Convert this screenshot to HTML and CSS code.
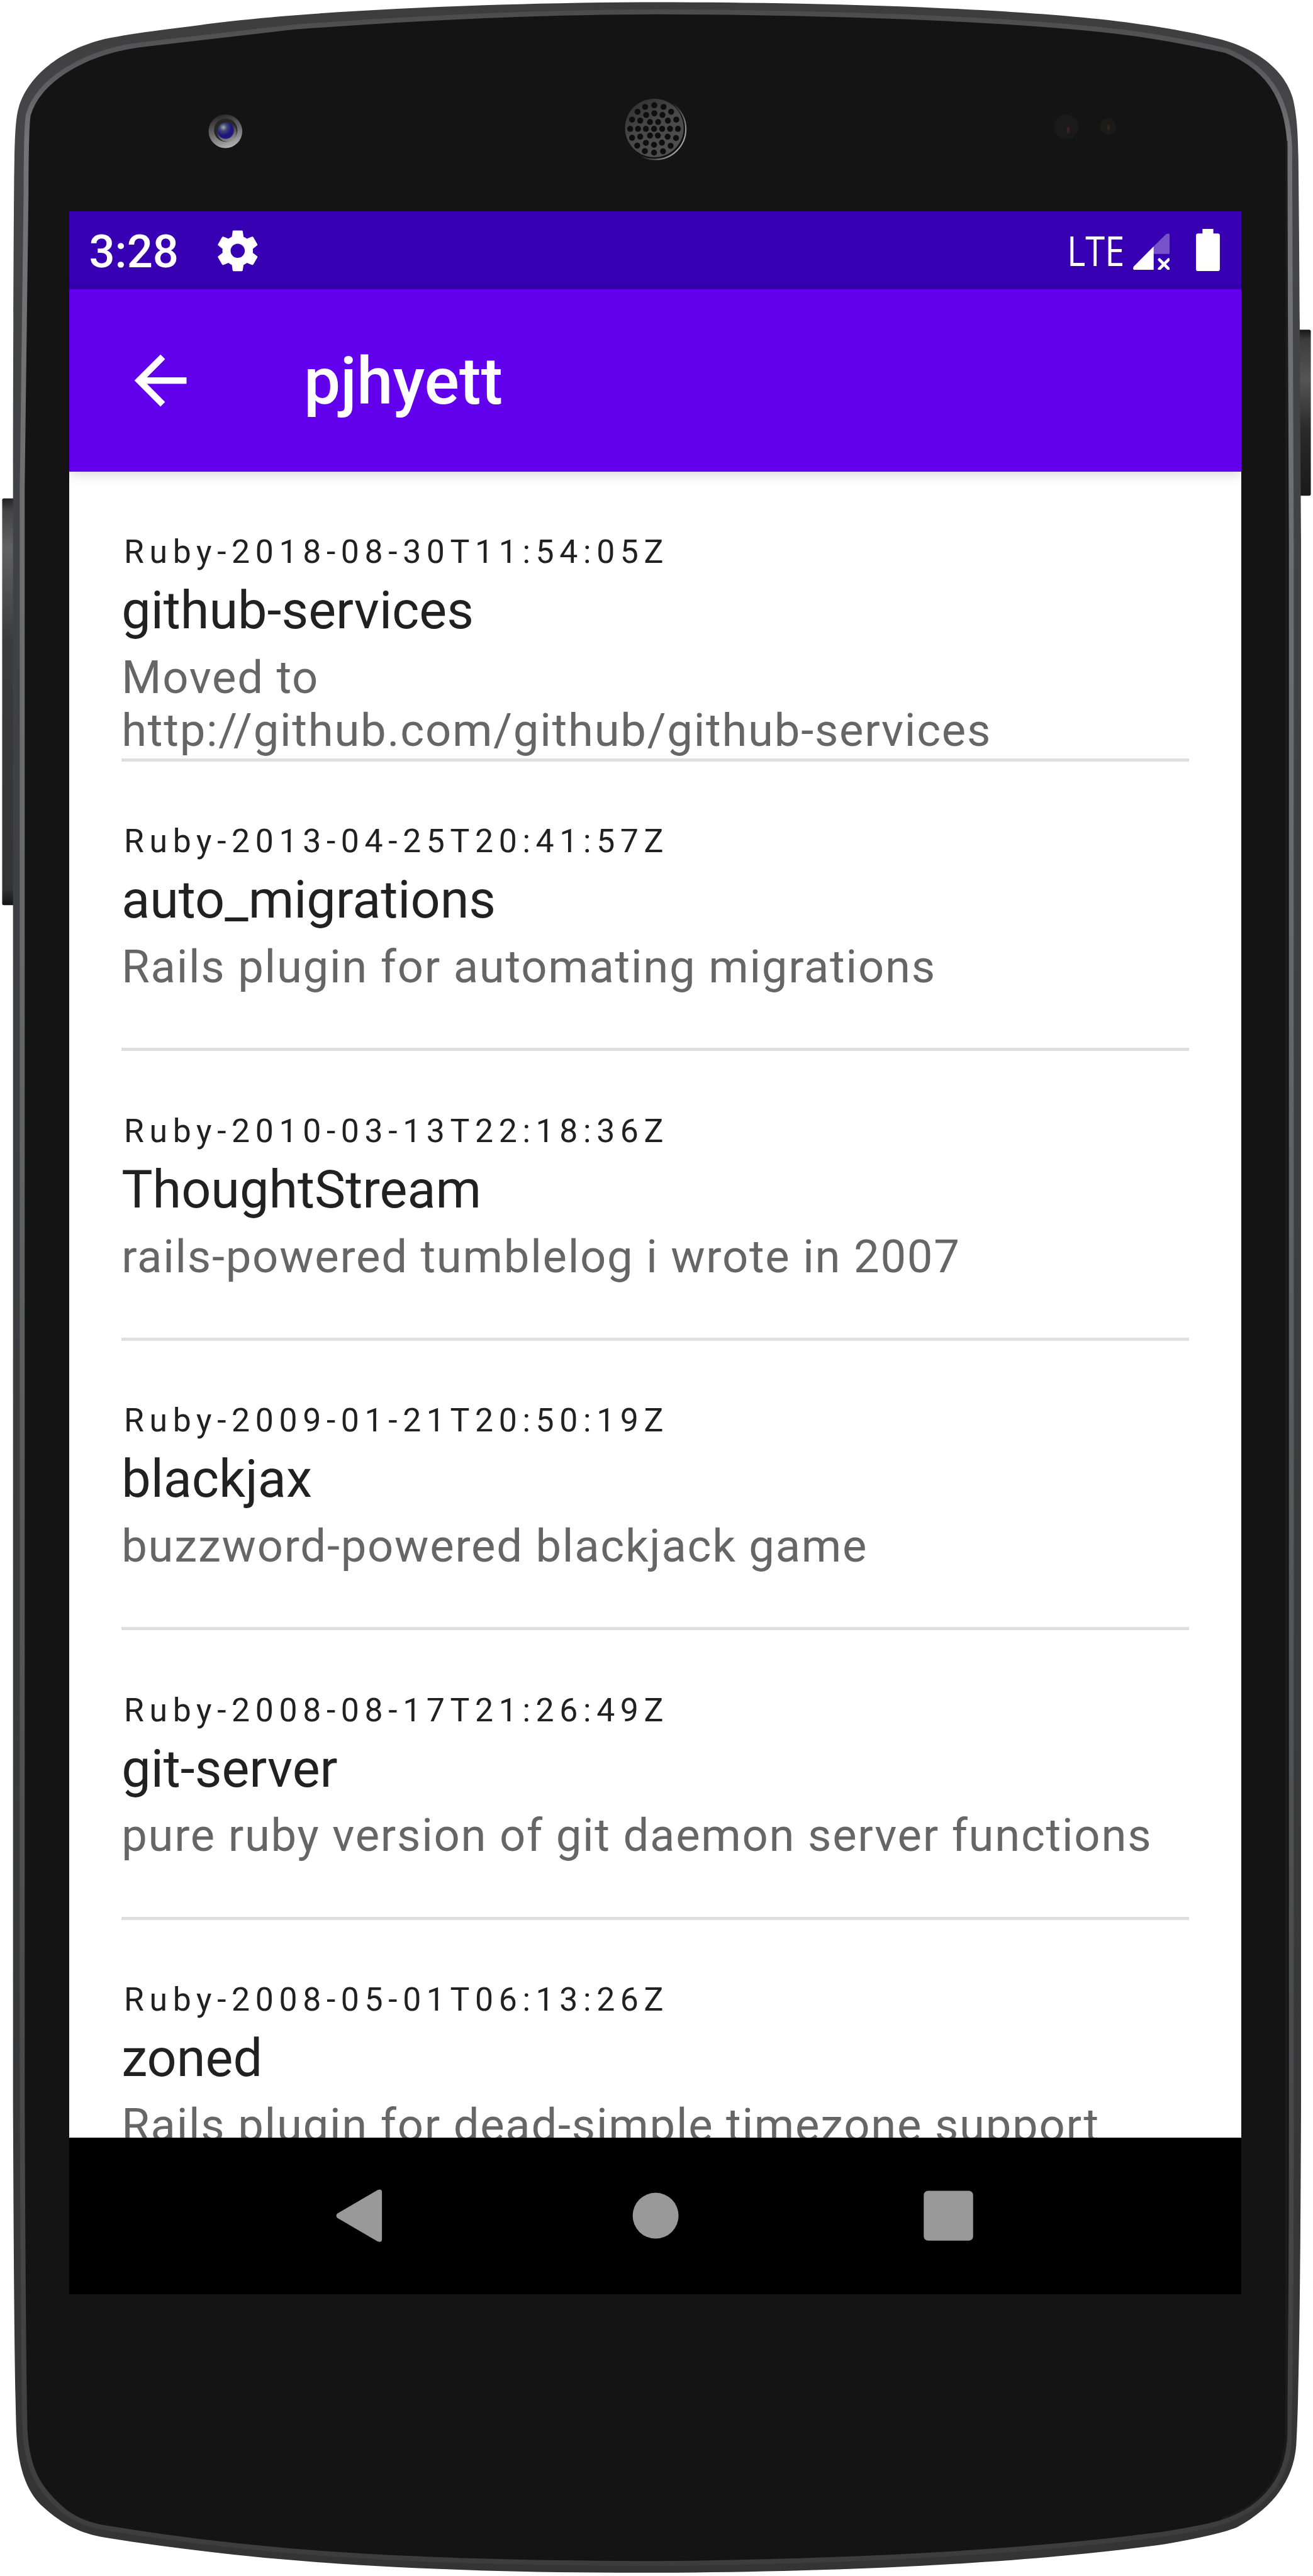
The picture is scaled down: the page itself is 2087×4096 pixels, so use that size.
FILE: index.html
```html
<!DOCTYPE html>
<html lang="en">
<head>
<meta charset="utf-8">
<title>pjhyett</title>
<link rel="stylesheet" href="styles.css">
</head>
<body>
<div class="device">
  <svg class="device-frame" viewBox="0 0 2420 4750" preserveAspectRatio="none" aria-hidden="true">
    <defs>
      <linearGradient id="rim" x1="0" y1="0" x2="0" y2="1">
        <stop offset="0" stop-color="#3c3c3d"/><stop offset=".04" stop-color="#454547"/><stop offset=".3" stop-color="#3e4044"/><stop offset="1" stop-color="#343434"/>
      </linearGradient>
      <linearGradient id="edge" x1="0" y1="0" x2="0" y2="1">
        <stop offset="0" stop-color="#4c4c4d"/><stop offset=".02" stop-color="#58585a"/><stop offset=".05" stop-color="#747477"/><stop offset=".35" stop-color="#68696d"/><stop offset=".8" stop-color="#4a4a4a"/><stop offset="1" stop-color="#3d3d3d"/>
      </linearGradient>
      <linearGradient id="keyL" x1="0" y1="0" x2="0" y2="1">
        <stop offset="0" stop-color="#222"/><stop offset=".03" stop-color="#444"/><stop offset=".12" stop-color="#626262"/><stop offset=".35" stop-color="#3c3c3c"/><stop offset=".96" stop-color="#333"/><stop offset="1" stop-color="#151515"/>
      </linearGradient>
      <linearGradient id="keyR" x1="0" y1="0" x2="0" y2="1">
        <stop offset="0" stop-color="#161616"/><stop offset=".06" stop-color="#3c3c3c"/><stop offset=".3" stop-color="#555"/><stop offset=".6" stop-color="#2a2a2a"/><stop offset="1" stop-color="#1a1a1a"/>
      </linearGradient>
      <linearGradient id="lens" x1=".35" y1="0" x2=".65" y2="1">
        <stop offset="0" stop-color="#272727"/><stop offset=".5" stop-color="#6a6a6a"/><stop offset="1" stop-color="#b4b4b4"/>
      </linearGradient>
      <linearGradient id="lensRing" x1=".3" y1="0" x2=".7" y2="1">
        <stop offset=".3" stop-color="#2a2a2a"/><stop offset="1" stop-color="#9a979c"/>
      </linearGradient>
      <radialGradient id="iris" cx=".36" cy=".3" r=".75">
        <stop offset="0" stop-color="#a3abc0"/><stop offset=".3" stop-color="#41486e"/><stop offset=".65" stop-color="#1a1486"/><stop offset="1" stop-color="#241d70"/>
      </radialGradient>
      <linearGradient id="grille" x1="0" y1="0" x2=".6" y2="1">
        <stop offset="0" stop-color="#2c2c2c"/><stop offset=".5" stop-color="#474747"/><stop offset="1" stop-color="#4e4e4e"/>
      </linearGradient>
      <linearGradient id="grilleRing" x1="0" y1="0" x2="1" y2=".6">
        <stop offset=".6" stop-color="#151515"/><stop offset="1" stop-color="#a0a0a0"/>
      </linearGradient>
    </defs>
    <rect x="4" y="919" width="28" height="750" rx="3" fill="url(#keyL)"/>
    <rect x="2390" y="608" width="26" height="306" rx="3" fill="url(#keyR)"/>
    <path fill="url(#rim)" d="M1210 4C900 5 560 20 370 46C300 55 240 62 193 72C110 92 50 142 34 200C28 222 27 260 26 330C25 460 24 700 24 900V3880C25 4100 26 4350 30 4480C33 4560 54 4600 80 4623C115 4655 150 4672 193 4679C500 4728 800 4744 1210 4744C1596 4742 1904 4724 2136 4693C2200 4682 2250 4672 2280 4660C2350 4622 2384 4570 2389 4510C2394 4430 2397 4200 2398 3880V1000C2396 700 2395 450 2393 290C2392 240 2390 212 2383 182C2368 130 2320 92 2252 73C2200 60 2140 49 2059 39C1850 14 1500 4 1210 4Z"/>
    <path fill="#141414" stroke="url(#edge)" stroke-width="9" d="M1210 22C950 22 700 38 540 50C430 62 330 74 255 83C150 98 70 150 52 212C48 240 48 300 48 360C46 500 43 700 41 900V3880C42 4100 43 4350 46 4480C50 4560 76 4594 118 4630C145 4650 170 4658 200 4662C500 4712 800 4726 1210 4727C1596 4723 1904 4704 2136 4674C2200 4664 2240 4656 2260 4648C2340 4618 2373 4562 2376 4500C2378 4400 2380 4200 2380 3880V1000C2379 700 2379 400 2377 270C2374 200 2352 130 2259 93C2200 80 2130 66 2059 58C1850 34 1500 22 1210 22Z"/>
    <path fill="none" stroke="#1c1c1c" stroke-width="4" d="M2371 260V4480C2371 4560 2330 4620 2252 4644"/>

    <circle cx="415.5" cy="242" r="31" fill="url(#lens)"/>
    <circle cx="416" cy="240" r="21.500" fill="#262626"/>
    <circle cx="418" cy="243" r="18" fill="url(#lensRing)"/>
    <circle cx="416" cy="241" r="15" fill="url(#iris)"/>

    <circle cx="1208" cy="238" r="56" fill="#101010" stroke="url(#grilleRing)" stroke-width="2.500"/>
    <circle cx="1206" cy="236" r="54" fill="url(#grille)"/>
    <g fill="#0e0e0e">
      <circle cx="1206" cy="194" r="5.500"/><circle cx="1189" cy="197" r="5.500"/><circle cx="1223" cy="197" r="5.500"/><circle cx="1175" cy="206" r="5.500"/><circle cx="1237" cy="206" r="5.500"/>
      <circle cx="1206" cy="209" r="5.500"/><circle cx="1191" cy="212" r="5.500"/><circle cx="1221" cy="212" r="5.500"/><circle cx="1165" cy="220.500" r="5.500"/><circle cx="1246.500" cy="220.500" r="5.500"/>
      <circle cx="1180" cy="222.500" r="5.500"/><circle cx="1231" cy="222.500" r="5.500"/><circle cx="1198" cy="225" r="5.500"/><circle cx="1213" cy="225" r="5.500"/>
      <circle cx="1161.500" cy="237.500" r="5.500"/><circle cx="1176" cy="237.500" r="5.500"/><circle cx="1190.500" cy="237.500" r="5.500"/><circle cx="1205.500" cy="237.500" r="5.500"/><circle cx="1220.500" cy="237.500" r="5.500"/><circle cx="1235" cy="237.500" r="5.500"/><circle cx="1249.500" cy="237.500" r="5.500"/>
      <circle cx="1198" cy="250" r="5.500"/><circle cx="1212.500" cy="250" r="5.500"/><circle cx="1180" cy="252" r="5.500"/><circle cx="1230.500" cy="252" r="5.500"/><circle cx="1165" cy="254" r="5.500"/><circle cx="1246" cy="254.500" r="5.500"/>
      <circle cx="1190.500" cy="263.500" r="5.500"/><circle cx="1220" cy="263" r="5.500"/><circle cx="1205.500" cy="267" r="5.500"/><circle cx="1174.500" cy="268.500" r="5.500"/><circle cx="1236" cy="269" r="5.500"/>
      <circle cx="1188.500" cy="278.500" r="5.500"/><circle cx="1222" cy="279" r="5.500"/><circle cx="1205.500" cy="281.500" r="5.500"/>
    </g>

    <circle cx="1965" cy="234" r="23" fill="#1b1a1a"/><ellipse cx="1969" cy="240" rx="3" ry="6" fill="#35231f"/>
    <circle cx="2042" cy="233" r="15" fill="#1c1b1a"/><ellipse cx="2043" cy="235" rx="2.500" ry="5" fill="#35231f"/>
  </svg>

  <main class="screen">
    <header class="status-bar">
      <span class="clock">3:28</span>
      <svg class="gear" viewBox="0 0 24 24"><path d="M19.430 12.980c.04-.32.07-.64.07-.98s-.03-.66-.07-.98l2.110-1.650c.19-.15.24-.42.12-.64l-2-3.460c-.12-.22-.39-.3-.61-.22l-2.490 1c-.52-.4-1.080-.73-1.690-.98l-.38-2.650C14.460 2.180 14.250 2 14 2h-4c-.25 0-.46.18-.49.42l-.38 2.650c-.61.25-1.170.59-1.690.98l-2.490-1c-.23-.09-.49 0-.61.22l-2 3.460c-.13.22-.07.49.12.64l2.110 1.650c-.04.32-.07.65-.07.98s.03.66.07.98l-2.110 1.650c-.19.15-.24.42-.12.64l2 3.460c.12.22.39.3.61.22l2.490-1c.52.4 1.080.73 1.690.98l.38 2.650c.03.24.24.42.49.42h4c.25 0 .46-.18.49-.42l.38-2.650c.61-.25 1.170-.59 1.690-.98l2.490 1c.23.09.49 0 .61-.22l2-3.460c.12-.22.07-.49-.12-.64l-2.110-1.650zM12 15.500c-1.930 0-3.500-1.570-3.500-3.500s1.570-3.500 3.500-3.500 3.500 1.570 3.500 3.500-1.570 3.500-3.500 3.500z"/></svg>
      <span class="network">LTE</span>
      <svg class="signal" viewBox="0 0 68 68">
        <path opacity=".32" d="M38 24L61 1.500Q68-1.500 68 5V38H38Z"/>
        <path d="M38 24V68H3Q-2 66 1.500 61Z"/>
        <path d="M48.500 48.500L65.500 65.500M65.500 48.500L48.500 65.500" fill="none" stroke="#fff" stroke-width="5.500" stroke-linecap="round"/>
      </svg>
      <svg class="battery" viewBox="0 0 44 78"><path d="M12 0H32V8.500H40Q44 8.500 44 12.500V74Q44 78 40 78H4Q0 78 0 74V12.500Q0 8.500 4 8.500H12Z"/></svg>
    </header>

    <div class="app-bar">
      <svg class="back" viewBox="0 0 24 24"><path d="M20 11H7.830l5.590-5.590L12 4l-8 8 8 8 1.410-1.410L7.830 13H20v-2z"/></svg>
      <h1 class="app-title">pjhyett</h1>
    </div>

    <ul class="repo-list">
      <li class="repo"><div class="overline">Ruby-2018-08-30T11:54:05Z</div><div class="name">github-services</div><p class="about">Moved to<br>http://github.com/github/github-services</p></li>
      <li class="repo"><div class="overline">Ruby-2013-04-25T20:41:57Z</div><div class="name">auto_migrations</div><p class="about">Rails plugin for automating migrations</p></li>
      <li class="repo"><div class="overline">Ruby-2010-03-13T22:18:36Z</div><div class="name">ThoughtStream</div><p class="about">rails-powered tumblelog i wrote in 2007</p></li>
      <li class="repo"><div class="overline">Ruby-2009-01-21T20:50:19Z</div><div class="name">blackjax</div><p class="about">buzzword-powered blackjack game</p></li>
      <li class="repo"><div class="overline">Ruby-2008-08-17T21:26:49Z</div><div class="name">git-server</div><p class="about">pure ruby version of git daemon server functions</p></li>
      <li class="repo"><div class="overline">Ruby-2008-05-01T06:13:26Z</div><div class="name">zoned</div><p class="about">Rails plugin for dead-simple timezone support</p></li>
    </ul>

    <nav class="nav-bar">
      <svg class="nav-icon" viewBox="-72 -72 144 144"><path d="M-46.500-4L28-47.500Q36-50.500 36-43V43Q36 50.500 28 47.500L-46.500 4Q-50 0-46.500-4Z"/></svg>
      <svg class="nav-icon" viewBox="-72 -72 144 144"><circle r="42.300"/></svg>
      <svg class="nav-icon" viewBox="-72 -72 144 144"><rect x="-45" y="-46" width="91" height="92" rx="8"/></svg>
    </nav>
  </main>
</div>
</body>
</html>
```
FILE: styles.css
```css
/* 1rem is one density-independent pixel of the device screen */
html {
  font-size: 5.174px;
}

body {
  margin: 0;
  background: #fff;
  font-family: Roboto, "Liberation Sans", sans-serif;
}

.device {
  position: relative;
  box-sizing: border-box;
  width: 2087px;
  height: 4096px;
  padding: 336.3px 0 0 110.4px;
  overflow: hidden;
}

.device-frame {
  position: absolute;
  inset: 0;
  width: 100%;
  height: 100%;
}

.screen {
  position: relative;
  display: flex;
  flex-direction: column;
  width: 360rem;
  height: 640rem;
  background: #fff;
  overflow: hidden;
}

.status-bar {
  display: flex;
  flex: none;
  align-items: center;
  box-sizing: border-box;
  height: 24rem;
  padding: 0 6.670rem 0 6rem;
  background: #3700b3;
  color: #fff;
  fill: #fff;
}

.clock {
  width: 38.200rem;
  font-size: 14rem;
  font-weight: 500;
  line-height: 24rem;
  padding-top: 1rem;
}

.gear {
  width: 15rem;
  height: 15rem;
}

.network {
  width: 16.500rem;
  margin-left: auto;
  margin-right: 3.700rem;
  font-family: "Open Sans", "Noto Sans", sans-serif;
  font-size: 12.600rem;
  line-height: 24rem;
  transform: scaleX(.86);
  transform-origin: 0 50%;
}

.signal {
  width: 11.330rem;
  height: 11.330rem;
  margin-right: 8rem;
  margin-top: .6rem;
}

.battery {
  width: 7.330rem;
  height: 13rem;
  margin-top: -.4rem;
}

.app-bar {
  position: relative;
  z-index: 1;
  display: flex;
  flex: none;
  align-items: center;
  box-sizing: border-box;
  height: 56rem;
  padding-left: 16rem;
  background: #6200ee;
  box-shadow: 0 .6rem 4rem rgba(0, 0, 0, .2);
}

.back {
  width: 24rem;
  height: 24rem;
  margin-right: 32rem;
  fill: #fff;
}

.app-title {
  margin: 0;
  padding-top: .4rem;
  color: #fff;
  font-size: 20rem;
  font-weight: 500;
  line-height: 55.600rem;
}

.repo-list {
  flex: 1;
  min-height: 0;
  margin: 0;
  padding: 0 16rem;
  list-style: none;
  overflow: hidden;
}

.repo {
  box-sizing: border-box;
  height: 89rem;
  padding-top: 18.700rem;
  border-bottom: 1rem solid #dfdfdf;
}

.overline {
  padding-left: .750rem;
  color: #212121;
  font-size: 10rem;
  letter-spacing: 1.667rem;
  line-height: 12rem;
}

.name {
  margin-top: 1.900rem;
  color: #212121;
  font-size: 16rem;
  line-height: 20rem;
}

.about {
  margin: 2.550rem 0 0;
  color: #666;
  font-size: 14rem;
  letter-spacing: .335rem;
  line-height: 16.400rem;
  white-space: nowrap;
}

.nav-bar {
  display: flex;
  flex: none;
  align-items: center;
  justify-content: center;
  gap: 66rem;
  height: 48rem;
  background: #000;
  fill: #999;
}

.nav-icon {
  width: 24rem;
  height: 24rem;
}
```
